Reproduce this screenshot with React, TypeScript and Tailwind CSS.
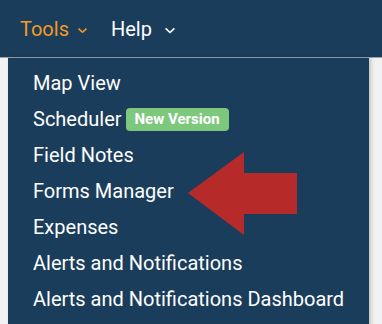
const items = [
  "Map View",
  "Scheduler",
  "Field Notes",
  "Forms Manager",
  "Expenses",
  "Alerts and Notifications",
  "Alerts and Notifications Dashboard",
];

function Chevron({ className }: { className: string }) {
  return (
    <svg viewBox="0 0 10 7" className={className} fill="currentColor">
      <path d="M1.2 0.8 L5 4.4 L8.8 0.8 L10 2 L5 6.6 L0 2 Z" />
    </svg>
  );
}

export default function App() {
  return (
    <div
      className="relative w-[382px] h-[324px] overflow-hidden bg-[#f2f2f2]"
      style={{ fontFamily: "Roboto, 'Liberation Sans', sans-serif" }}
    >
      <div className="h-[58px] bg-[#1a3d5c] flex items-center pl-[20px] border-b border-[#9aa3ab]">
        <span className="flex items-center text-[20px] text-[#f39a1f]">
          Tools
          <Chevron className="w-[9px] h-[7px] ml-[9px] mt-[4px]" />
        </span>
        <span className="flex items-center text-[20px] text-white ml-[24px]">
          Help
          <Chevron className="w-[10px] h-[7px] ml-[13px] mt-[4px]" />
        </span>
      </div>
      <div className="ml-[8px] w-[361px] bg-[#1a3d5c] pt-[7px] pl-[25px] shadow-[2px_0_4px_rgba(0,0,0,0.2)] h-[270px]">
        {items.map((item) => (
          <div key={item} className="h-[36px] flex items-center text-[20px] text-white">
            {item}
            {item === "Scheduler" && (
              <span className="ml-[4px] px-[9px] h-[23px] flex items-center rounded-[4px] bg-[#7ec87e] text-[15px] font-bold text-white">
                New Version
              </span>
            )}
          </div>
        ))}
      </div>
      <svg className="absolute left-0 top-0" width="382" height="324">
        <polygon
          points="188,193 244,152 244,173 297,173 297,214 244,214 244,235"
          fill="#b72a2a"
        />
      </svg>
    </div>
  );
}
